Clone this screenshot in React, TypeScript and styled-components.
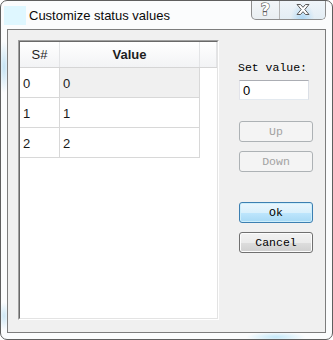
import React from "react";
import styled, { createGlobalStyle } from "styled-components";

const GlobalStyle = createGlobalStyle`
  html, body {
    margin: 0;
    padding: 0;
    background: #ffffff;
  }
`;

const rows = [
  { sn: "0", value: "0" },
  { sn: "1", value: "1" },
  { sn: "2", value: "2" },
];

export default function App() {
  const [value, setValue] = React.useState("0");

  return (
    <>
      <GlobalStyle />
      <Window>
        <TitleBar>
          <AppIcon />
          <Title>Customize status values</Title>
          <CaptionButtons>
            <HelpButton>?</HelpButton>
            <CloseButton>
              <svg width="14" height="11" viewBox="0 0 14 11">
                <path
                  d="M1 0.5 H4.5 L7 3.3 L9.5 0.5 H13 L8.8 5.5 L13 10.5 H9.5 L7 7.7 L4.5 10.5 H1 L5.2 5.5 Z"
                  fill="#ffffff"
                  stroke="#5a5a5a"
                  strokeWidth="1"
                  strokeLinejoin="round"
                />
              </svg>
            </CloseButton>
          </CaptionButtons>
        </TitleBar>
        <Client>
          <GridFrame>
            <GridInner>
              <HeaderRow>
                <HeaderCell $width={40}>S#</HeaderCell>
                <HeaderCell $width={140} $bold>
                  Value
                </HeaderCell>
                <HeaderCell $width={17} />
              </HeaderRow>
              {rows.map((r, i) => (
                <Row key={r.sn}>
                  <Cell $width={40}>{r.sn}</Cell>
                  <Cell $width={140} $current={i === 0}>
                    {r.value}
                  </Cell>
                </Row>
              ))}
            </GridInner>
          </GridFrame>
          <SidePanel>
            <Label>Set value:</Label>
            <ValueInput value={value} onChange={(e) => setValue(e.target.value)} />
            <DlgButton $kind="disabled" $top={21}>
              Up
            </DlgButton>
            <DlgButton $kind="disabled" $top={9}>
              Down
            </DlgButton>
            <DlgButton $kind="default" $top={30}>
              Ok
            </DlgButton>
            <DlgButton $kind="normal" $top={9}>
              Cancel
            </DlgButton>
          </SidePanel>
        </Client>
      </Window>
    </>
  );
}

const Window = styled.div`
  width: 333px;
  height: 340px;
  box-sizing: border-box;
  border: 1px solid #5f5f5f;
  border-radius: 7px;
  display: flex;
  flex-direction: column;
  overflow: hidden;
  background:
    radial-gradient(ellipse 6px 26px at 3px 66px, rgba(150, 205, 235, 0.55), transparent),
    radial-gradient(ellipse 6px 14px at 3px 315px, rgba(150, 205, 235, 0.45), transparent),
    radial-gradient(ellipse 30px 5px at 275px 336px, rgba(150, 215, 245, 0.55), transparent),
    #fbfcfd;
`;

const TitleBar = styled.div`
  height: 28px;
  display: flex;
  align-items: center;
  flex-shrink: 0;
`;

const AppIcon = styled.div`
  width: 22px;
  height: 19px;
  margin-left: 3px;
  background: #dff7ff;
`;

const Title = styled.div`
  margin-left: 3px;
  font-family: "Liberation Sans", Arial, sans-serif;
  font-size: 13px;
  color: #0a0a0a;
  flex: 1;
`;

const CaptionButtons = styled.div`
  align-self: flex-start;
  margin-top: -1px;
  margin-right: 6px;
  height: 19px;
  display: flex;
  border: 1px solid #8d8d8d;
  border-top: none;
  border-radius: 0 0 5px 5px;
  overflow: hidden;
  background: linear-gradient(#f4f7f9, #e9eef2);
`;

const HelpButton = styled.div`
  width: 27px;
  border-right: 1px solid #b5b5b5;
  display: flex;
  align-items: center;
  justify-content: center;
  font-family: "DejaVu Sans", sans-serif;
  font-weight: bold;
  font-size: 16px;
  line-height: 16px;
  color: #ffffff;
  -webkit-text-stroke: 1.2px #5a5a5a;
  paint-order: stroke fill;
`;

const CloseButton = styled.div`
  width: 45px;
  display: flex;
  align-items: center;
  justify-content: center;
  background: radial-gradient(ellipse 12px 16px at 50% 100%, rgba(160, 210, 245, 0.8), transparent),
    linear-gradient(#f0f5f9, #e3edf4);
`;

const Client = styled.div`
  flex: 1;
  margin: 0 6px 6px 6px;
  border: 1px solid #7d7d7d;
  background: #f0f0f0;
  display: flex;
  padding: 10px 0 12px 10px;
`;

const GridFrame = styled.div`
  width: 201px;
  box-sizing: border-box;
  border: 1px solid;
  border-color: #a0a0a0 #ffffff #ffffff #a0a0a0;
  display: flex;
`;

const GridInner = styled.div`
  flex: 1;
  border: 1px solid;
  border-color: #696969 #e3e3e3 #e3e3e3 #696969;
  background: #ffffff;
`;

const HeaderRow = styled.div`
  display: flex;
  height: 25px;
  border-bottom: 1px solid #d5d5d5;
  background: linear-gradient(#ffffff, #f2f3f5);
`;

const HeaderCell = styled.div<{ $width: number; $bold?: boolean }>`
  width: ${(p) => p.$width}px;
  box-sizing: border-box;
  border-right: 1px solid #e3e4e6;
  display: flex;
  align-items: center;
  justify-content: center;
  font-family: "Liberation Sans", Arial, sans-serif;
  font-size: 13px;
  font-weight: ${(p) => (p.$bold ? "bold" : "normal")};
  color: #1e1e1e;
`;

const Row = styled.div`
  display: flex;
  height: 30px;
`;

const Cell = styled.div<{ $width: number; $current?: boolean }>`
  width: ${(p) => p.$width}px;
  box-sizing: border-box;
  border-right: 1px solid #d8d8d8;
  border-bottom: 1px solid #d8d8d8;
  background: ${(p) => (p.$current ? "#f0f0f0" : "#ffffff")};
  display: flex;
  align-items: center;
  padding: 2px 0 0 3px;
  font-family: "Liberation Sans", Arial, sans-serif;
  font-size: 13px;
  color: #1a1a1a;
`;

const SidePanel = styled.div`
  margin-left: 19px;
  width: 75px;
  display: flex;
  flex-direction: column;
`;

const Label = styled.div`
  margin-top: 21px;
  height: 14px;
  line-height: 14px;
  font-family: "Liberation Mono", "Courier New", monospace;
  font-size: 11.5px;
  color: #000000;
  white-space: nowrap;
`;

const ValueInput = styled.input`
  margin: 5px 0 0 1px;
  width: 70px;
  height: 20px;
  box-sizing: border-box;
  border: 1px solid;
  border-color: #abadb3 #dbdfe6 #e3e9ef #e2e3ea;
  padding: 0 3px;
  font-family: "Liberation Sans", Arial, sans-serif;
  font-size: 13px;
  color: #000000;
  background: #ffffff;
  outline: none;
`;

const buttonLooks = {
  disabled: {
    border: "#adb2b5",
    bg: "#f4f4f4",
    color: "#a3a3a3",
    shadow: "none",
  },
  default: {
    border: "#3c7fb1",
    bg: "linear-gradient(#eaf6fd 0%, #d9f0fc 50%, #bee6fd 51%, #a7d9f5 100%)",
    color: "#000000",
    shadow: "inset 0 0 0 1px #cdeefb",
  },
  normal: {
    border: "#707070",
    bg: "linear-gradient(#f2f2f2 0%, #ebebeb 50%, #dddddd 51%, #cfcfcf 100%)",
    color: "#000000",
    shadow: "inset 0 0 0 1px #fcfcfc",
  },
};

const DlgButton = styled.div<{ $kind: keyof typeof buttonLooks; $top: number }>`
  margin: ${(p) => p.$top}px 0 0 1px;
  width: 74px;
  height: 21px;
  box-sizing: border-box;
  border: 1px solid ${(p) => buttonLooks[p.$kind].border};
  border-radius: 3px;
  background: ${(p) => buttonLooks[p.$kind].bg};
  box-shadow: ${(p) => buttonLooks[p.$kind].shadow};
  color: ${(p) => buttonLooks[p.$kind].color};
  display: flex;
  align-items: center;
  justify-content: center;
  font-family: "Liberation Mono", "Courier New", monospace;
  font-size: 11.5px;
`;
